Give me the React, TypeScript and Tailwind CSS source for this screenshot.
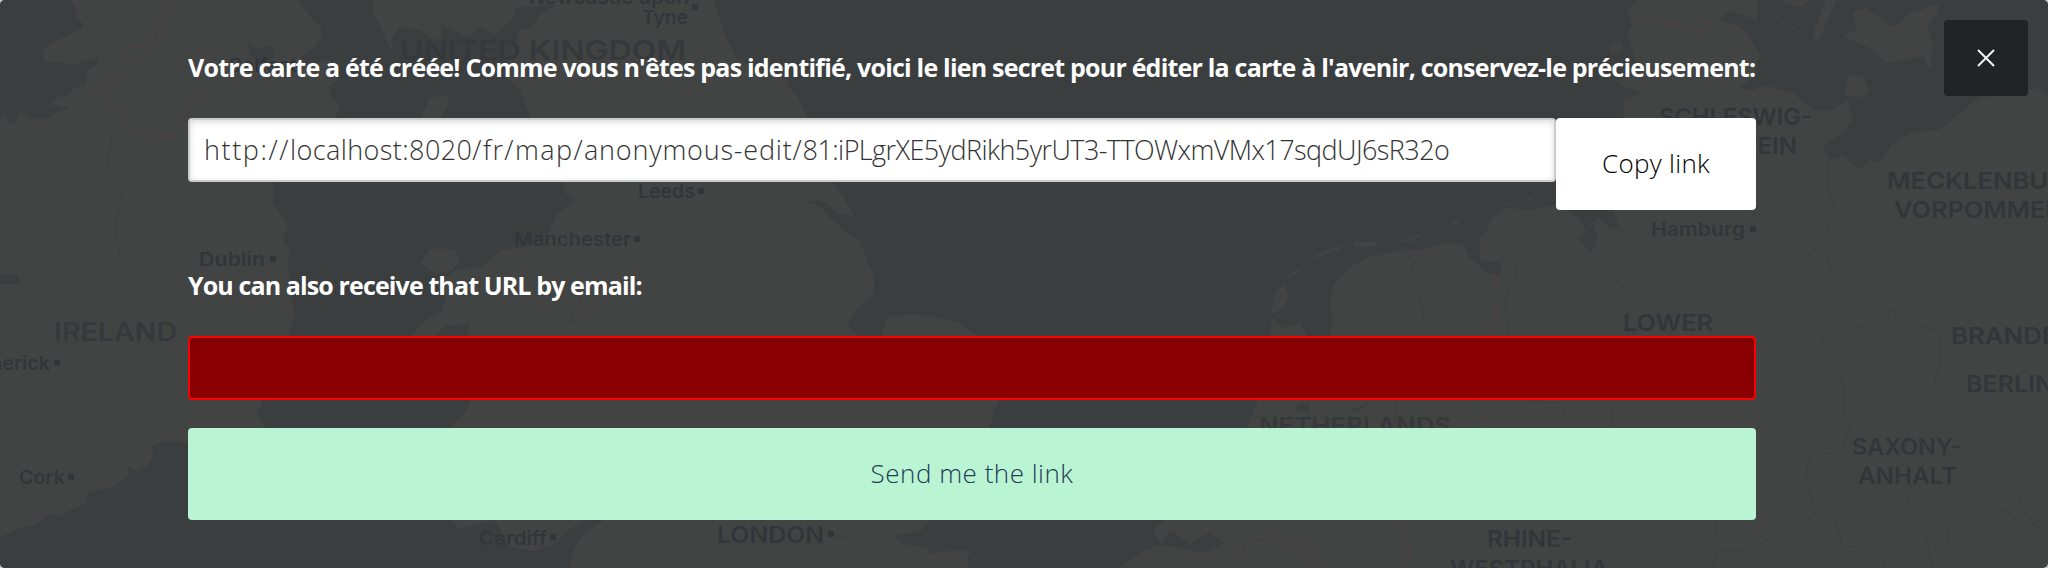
import { useState } from "react";

type Label = { text: string; x: number; y: number; width: number; size: number; spaced?: boolean };

const labels: Label[] = [
  { text: "Newcastle upon", x: 529, y: 4, width: 160, size: 19 },
  { text: "Tyne", x: 642, y: 24, width: 46, size: 19 },
  { text: "UNITED KINGDOM", x: 400, y: 60, width: 286, size: 27, spaced: true },
  { text: "Belfast", x: 229, y: 72, width: 68, size: 19 },
  { text: "Leeds", x: 638, y: 198, width: 57, size: 19 },
  { text: "Manchester", x: 514, y: 246, width: 117, size: 19 },
  { text: "Dublin", x: 199, y: 266, width: 66, size: 19 },
  { text: "IRELAND", x: 54, y: 341, width: 123, size: 25, spaced: true },
  { text: "Limerick", x: -32, y: 370, width: 82, size: 19 },
  { text: "Cork", x: 19, y: 484, width: 46, size: 19 },
  { text: "Cardiff", x: 479, y: 545, width: 68, size: 19 },
  { text: "LONDON", x: 717, y: 543, width: 107, size: 23 },
  { text: "NETHERLANDS", x: 1259, y: 434, width: 192, size: 23, spaced: true },
  { text: "SCHLESWIG-", x: 1659, y: 125, width: 153, size: 23 },
  { text: "HOLSTEIN", x: 1676, y: 154, width: 121, size: 23 },
  { text: "Hamburg", x: 1651, y: 236, width: 94, size: 19 },
  { text: "MECKLENBURG-", x: 1887, y: 189, width: 209, size: 23 },
  { text: "VORPOMMERN", x: 1894, y: 218, width: 187, size: 23 },
  { text: "LOWER", x: 1623, y: 331, width: 90, size: 23 },
  { text: "BRANDENBURG", x: 1951, y: 344, width: 198, size: 23 },
  { text: "BERLIN", x: 1966, y: 392, width: 88, size: 23 },
  { text: "SAXONY-", x: 1852, y: 455, width: 110, size: 23 },
  { text: "ANHALT", x: 1858, y: 484, width: 99, size: 23 },
  { text: "RHINE-", x: 1487, y: 547, width: 85, size: 23 },
  { text: "WESTPHALIA", x: 1450, y: 577, width: 158, size: 23 },
];

const towns = [
  [692, 4], [698, 188], [634, 236], [270, 256], [54, 360], [68, 474], [550, 534], [828, 531], [1750, 226],
];

const seas = [
  "M0 0H70L77 10 74 17 84 24 81 29 62 38 48 45 42 52 46 62 60 62 74 65 86 60 100 58 96 66 88 70 86 84 74 88 68 95 56 98 50 105 70 107 53 114 48 118 30 119 20 113 14 124 8 125 5 114 0 118Z",
  "M298 0L303 7 311 18 320 26 323 35 316 46 300 57 310 68 324 59 334 64 337 80 329 87 331 97 340 105 336 118 302 150 273 183 273 203 280 213 288 224 283 240 290 250 288 265 292 300 295 317 288 334 278 365 263 400 260 409 256 412 265 427 230 445 188 442 165 441 150 447 154 454 148 465 138 471 127 466 129 476 112 487 89 492 85 504 70 510 58 517 50 513 36 524 18 529 0 537V568H569L574 547 586 532 604 520 585 520 567 531 556 544 536 551 509 547 495 520 478 524 460 529 451 520 440 480 430 450 451 427 464 414 471 400 469 365 466 336 471 324 446 325 435 336 411 336 424 321 442 311 446 297 436 285 455 270 482 267 500 250 527 247 549 233 558 213 576 200 565 193 563 182 545 148 530 117 520 90 503 73 513 50 520 30 532 28 540 14 557 5 530 7 517 7 512 20 503 27 496 35 480 27 467 37 440 24 443 37 434 40 420 30 400 27 391 40 395 55 386 39 378 22 372 13 373 0Z",
  "M713 0L718 12 722 27 730 45 738 60 760 70 787 80 792 92 798 97 807 117 820 150 834 183 844 198 854 217 844 214 836 213 826 202 813 199 804 205 813 203 822 209 834 222 850 235 859 240 866 258 874 276 874 294 859 307 847 326 859 336 881 336 888 317 910 315 930 316 957 322 979 336 1000 370 999 401 993 414 990 427 968 475 930 520 921 531 894 536 902 544 926 547 930 554 948 551 972 551 966 559 970 568H1118L1144 551 1162 544 1153 531 1164 520 1210 482 1247 427 1258 400 1265 370 1270 336 1272 318 1278 323 1285 328 1300 323 1307 336 1325 345 1332 336 1330 330 1333 323 1330 300 1334 285 1340 277 1352 266 1370 257 1403 250 1418 251 1447 242 1463 245 1470 258 1487 273 1500 275 1502 262 1480 260 1480 237 1487 231 1490 220 1507 208 1530 210 1557 205 1577 217 1587 232 1577 238 1584 244 1587 251 1592 252 1598 237 1592 223 1600 218 1607 226 1620 230 1613 210 1590 170 1632 142 1623 117 1624 100 1643 93 1620 85 1617 80 1640 73 1634 55 1627 33 1632 25 1627 13 1637 0Z",
  "M1757 0V20L1740 14 1730 10 1720 20 1735 24 1749 35 1760 55 1752 78 1740 87 1752 91 1767 85 1780 90 1793 93 1813 110 1830 111 1847 100 1853 120 1843 133 1828 142 1823 150 1830 160 1843 155 1860 170 1870 160 1880 163 1893 143 1910 133 1940 130 1960 113 1980 97 2010 96 2034 88 2048 95V0Z",
  "M248 43L255 48 272 46 275 57 260 64 250 55ZM0 274L18 274 20 284H0Z",
  "M1170 531L1190 544 1210 532 1225 543 1205 553 1180 548 1160 545Z",
  "M1297 405L1308 402 1310 412 1297 411ZM1349 411L1372 400 1356 412Z",
];

const islands =
  "M1843 37L1857 29 1853 12 1865 8 1893 27 1902 22 1910 12 1922 10 1940 2 1936 15 1927 25 1933 45 1930 70 1923 57 1905 60 1887 63 1870 48ZM1826 0H1837L1817 44 1813 34ZM1773 13L1790 29 1800 24 1794 30 1784 26ZM1849 75L1863 77 1870 92 1860 98 1844 94ZM1607 0L1600 20 1598 42 1599 20ZM1609 45L1622 43 1623 50 1612 55ZM421 118L430 98 446 95 449 104 440 118ZM1270 313L1276 292 1284 284 1289 297 1284 307 1273 314ZM1284 279L1292 272 1304 266 1297 274ZM1312 259L1322 251 1345 245 1337 251 1318 257ZM1353 242L1382 242 1370 247 1355 247ZM1399 241L1424 233 1413 241 1400 243ZM1449 221L1461 219 1456 225ZM1493 204L1517 202 1512 205ZM1523 199L1537 195 1531 200ZM420 263L429 250 439 248 455 250 460 263 448 273 435 274ZM1778 0H1810L1800 8 1790 4Z";

const borders = [
  "M169 0L164 15 157 30 153 41 143 46 136 45 128 48 124 50 125 57 137 62 134 68 124 72 119 80 111 81 98 88 105 98 113 106 125 115 128 127 140 131 150 137 164 138 177 132 184 120 190 104 203 93 214 103 217 112",
  "M1629 16L1653 17 1665 22 1681 26 1690 34 1701 29 1715 22",
  "M1497 275L1496 290 1500 300 1497 320 1488 335M1484 400L1487 415 1481 426",
  "M1393 520L1406 530 1410 548 1405 568",
  "M1232 555L1244 557 1242 543 1254 539 1268 540 1280 535 1289 548 1301 540 1307 551 1309 563 1325 565",
  "M578 294L580 308 586 318 590 326",
];

const ridges =
  "M110 284L92 306 85 320 90 330 75 342 64 362M112 135L108 170 122 195 118 215 115 235 120 255M1403 250L1414 262 1404 287 1420 297 1424 318 1411 330M1424 297L1430 284 1440 287 1455 297 1480 323M1515 262L1516 275 1505 300 1507 335M1616 235V280L1630 293 1650 307M1828 160L1826 182 1834 205 1826 235 1810 256 1780 246 1765 224 1752 212M1826 256L1834 276M1860 295L1875 301 1890 309 1898 316 1908 324 1938 330 1940 360 1932 395 1912 420 1906 440M1890 309L1888 326 1873 331 1860 327 1825 333 1822 340 1840 370 1846 415 1850 425 1842 450 1810 456 1806 475 1815 515 1800 525 1780 530 1750 552 1718 550 1712 568M1815 515L1836 520 1842 545 1876 550 1886 568M1912 484L1906 505 1925 530 1932 568M1955 448L1970 465 2000 475 2020 495 2022 510 2048 540M1950 546L1948 528 1985 515 2005 510 2024 525 2040 520M1718 520L1716 535 1722 552M1695 522L1680 538 1660 530 1645 550 1620 568M1520 404L1535 400 1560 404 1568 420M1395 400L1396 425M1604 400L1612 412V427M1373 528L1382 548 1355 563M834 535L870 542M805 555L812 548M560 320L575 322 570 310 580 308";

function MapBackdrop() {
  return (
    <svg className="absolute inset-0 h-full w-full" viewBox="0 0 2048 568" aria-hidden="true">
      <rect width="2048" height="568" fill="#424443" />
      {seas.map((d) => (
        <path key={d} d={d} fill="#3b3e3f" />
      ))}
      <path d={islands} fill="#424443" />
      <path d={ridges} fill="none" stroke="#3e4040" strokeWidth="1.2" strokeLinejoin="round" />
      {borders.map((d) => (
        <path key={d} d={d} fill="none" stroke="#454041" strokeWidth="3" strokeLinejoin="round" />
      ))}
      <g fill="#32363a" fontFamily="Inter, sans-serif">
        {labels.map((l) => (
          <text
            key={l.text}
            x={l.x}
            y={l.y}
            fontSize={l.size}
            fontWeight={600}
            textLength={l.width}
            lengthAdjust="spacingAndGlyphs"
            fill={l.spaced ? "#35393c" : "#32363a"}
          >
            {l.text}
          </text>
        ))}
        {towns.map(([x, y]) => (
          <rect key={x} x={x} y={y} width="6" height="6" />
        ))}
      </g>
    </svg>
  );
}

export default function App() {
  const [email, setEmail] = useState("");

  return (
    <div className="h-[568px] w-[2048px] bg-[#c9cbcb] font-['Open_Sans',sans-serif]">
      <div className="relative flex h-full w-full items-start overflow-hidden rounded-[5px] pl-[188px] pr-5">
        <MapBackdrop />
        <main className="relative flex w-[1568px] flex-col">
          <h3 className="mt-[47px] h-[40px] whitespace-nowrap text-[25px] leading-[40px] font-bold tracking-[-0.795px] text-white">
            Votre carte a été créée! Comme vous n'êtes pas identifié, voici le lien secret pour éditer la carte à l'avenir, conservez-le précieusement:
          </h3>
          <div className="mt-[31px] flex items-start">
            <div className="h-16 w-[1368px] rounded-[4px] border-2 border-[#cccccc] bg-white px-[14px] text-[27px] leading-[59px] font-light whitespace-nowrap text-[#333333] shadow-[inset_0_2px_6px_rgba(0,0,0,0.15)]">
              <span className="tracking-[1.6px]">http://</span>
              <span className="tracking-[0.4px]">localhost:8020</span>
              <span className="tracking-[1.4px]">/fr/map/</span>
              <span className="tracking-[0.8px]">anonymous-edit/</span>
              <span className="tracking-[-0.57px]">81:iPLgrXE5ydRikh5yrUT3-TTOWxmVMx17sqdUJ6sR32o</span>
            </div>
            <button className="h-[92px] w-[200px] rounded-[4px] bg-white pb-px text-[26px] font-light tracking-[0.3px] text-black">
              Copy link
            </button>
          </div>
          <h3 className="mt-[55px] h-[40px] text-[25px] leading-[40px] font-bold tracking-[-0.88px] text-white">
            You can also receive that URL by email:
          </h3>
          <input
            type="email"
            value={email}
            onChange={(e) => setEmail(e.target.value)}
            className="mt-[31px] h-16 w-full rounded-[4px] border-2 border-[#ff0000] bg-[#8b0000] px-[14px] text-[27px] text-white shadow-[inset_0_2px_6px_rgba(0,0,0,0.15)] outline-none"
          />
          <button className="mt-7 h-[92px] w-full rounded-[4px] bg-[#b9f5d2] pb-px text-[26px] font-light tracking-[0.5px] text-[#263b58]">
            Send me the link
          </button>
        </main>
        <button aria-label="Close" className="relative mt-5 ml-auto flex h-[76px] w-[84px] items-center justify-center rounded-[4px] bg-[#202425]">
          <svg className="h-[18px] w-[18px]" viewBox="0 0 18 18" fill="none" stroke="#f4f4f4" strokeWidth="2">
            <path d="M1 1L17 17M17 1L1 17" />
          </svg>
        </button>
      </div>
    </div>
  );
}
